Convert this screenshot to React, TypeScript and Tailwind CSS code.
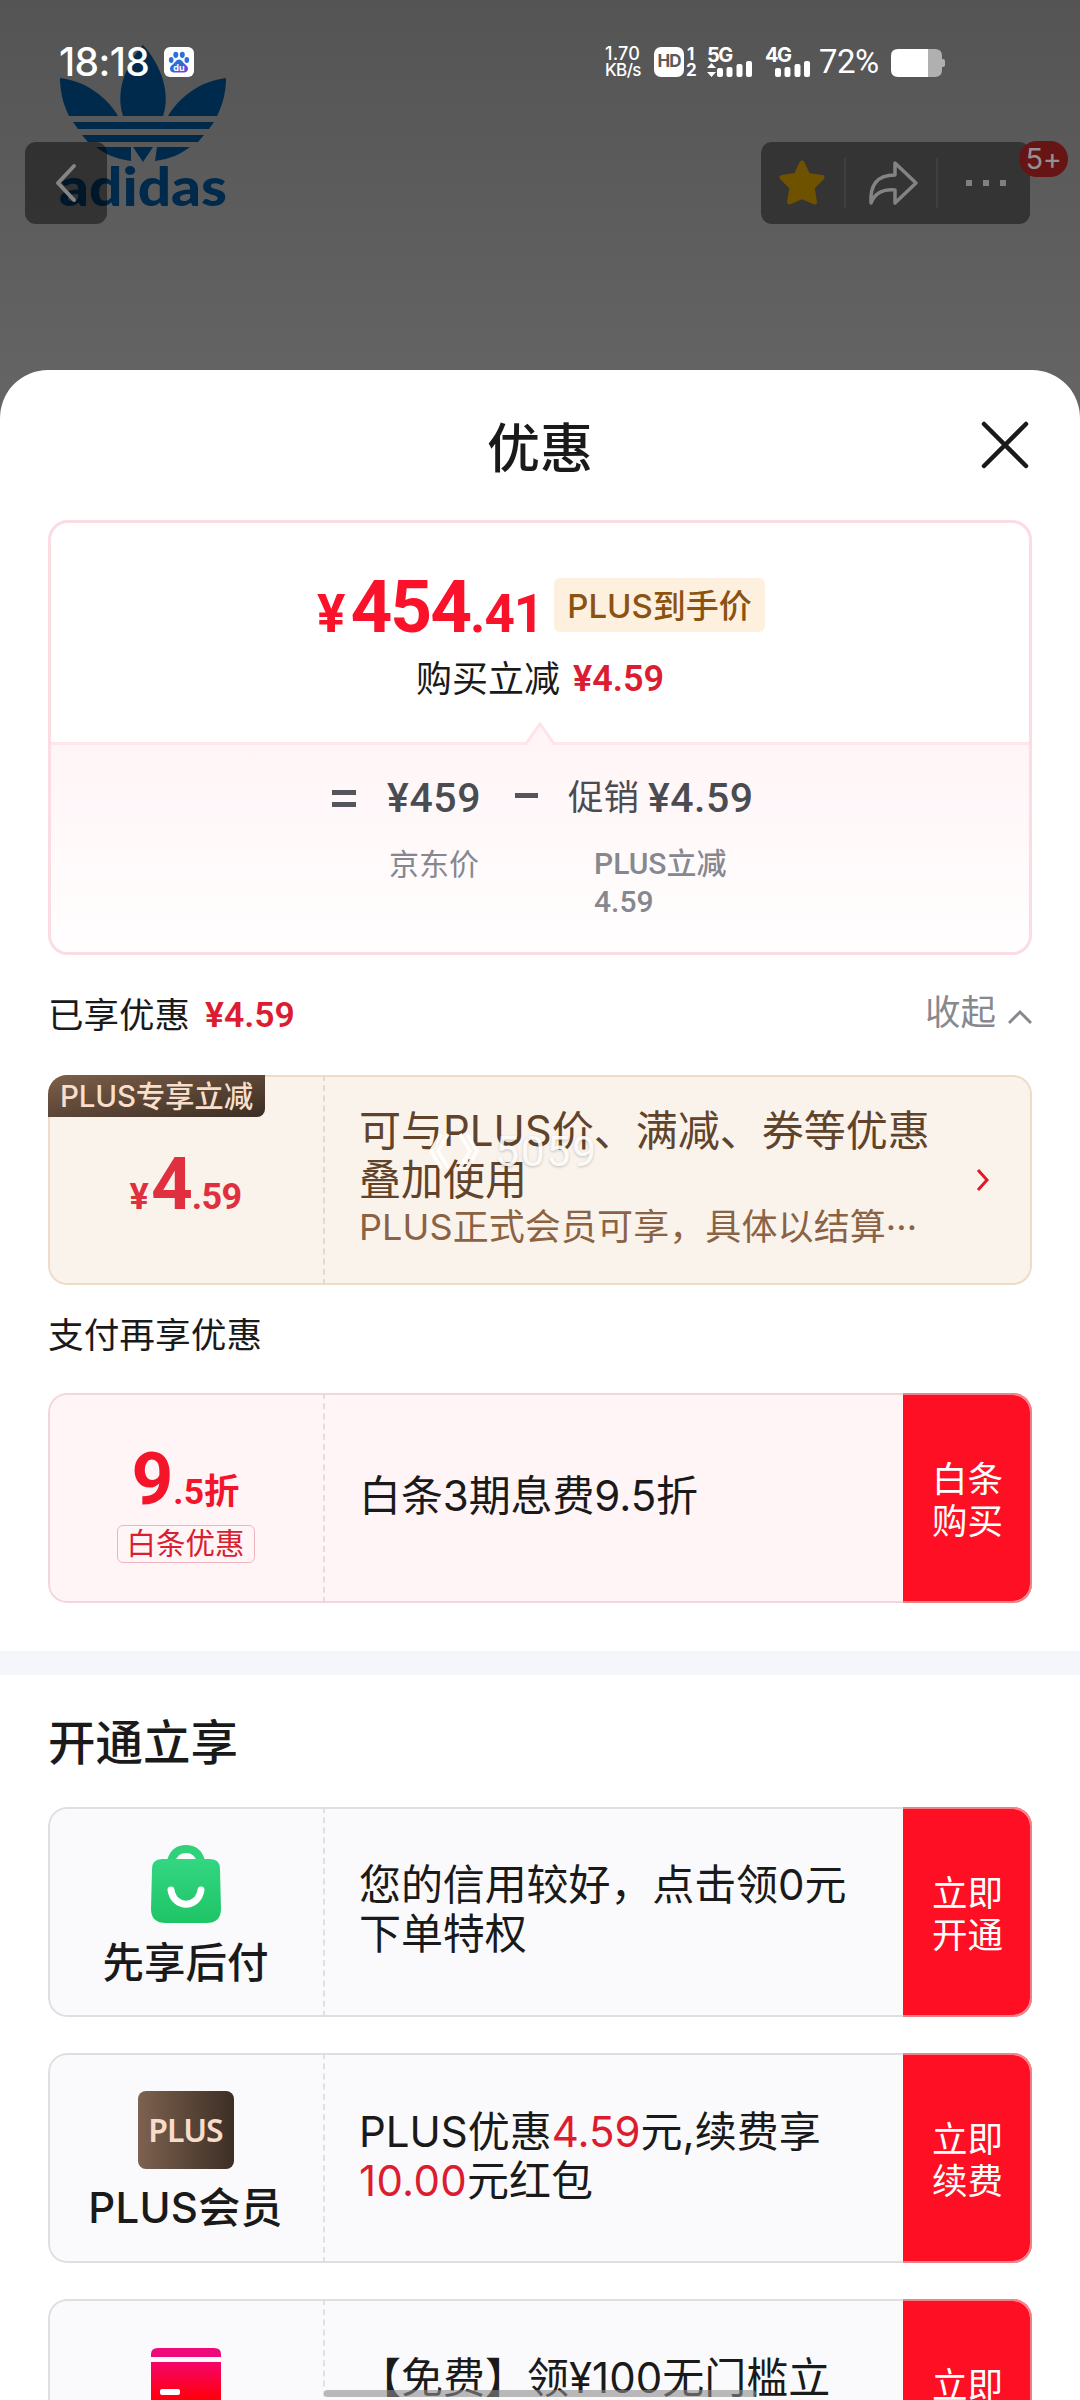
import React from "react";

const num = "font-['Roboto','Noto_Sans_CJK_SC',sans-serif]";

function Trefoil() {
  return (
    <svg width="170" height="170" viewBox="0 0 170 170" className="absolute left-[60px] top-[45px]" fill="#002a4c">
      <path d="M83 0C97 15 112 44 103 71H63C54 44 69 15 83 0Z" />
      <path d="M0 33C25 36 46 51 58 71H9C3 59 0 46 0 33Z" />
      <path d="M166 33C141 36 120 51 108 71H157C163 59 166 46 166 33Z" />
      <path d="M13 77H154L149 84H18Z" />
      <path d="M22 90H144L138 97H28Z" />
      <path d="M36 102H71V116C56 114 45 109 36 102Z" />
      <path d="M130 102H97L95 116C110 114 121 109 130 102Z" />
      <path d="M73 102H93L83 117Z" />
      <text x="-1" y="161" fontFamily="Lato, sans-serif" fontWeight="900" fontSize="53" textLength="168" lengthAdjust="spacingAndGlyphs">adidas</text>
    </svg>
  );
}

function Bars({ arrows }: { arrows?: boolean }) {
  return (
    <svg width="46" height="30" viewBox="0 0 46 30" fill="#fff" className="shrink-0">
      {arrows && <path d="M0 21L4.500 16L9 21ZM0 25L4.500 30L9 25Z" />}
      <rect x="10" y="21" width="6" height="9" rx="2" />
      <rect x="19.500" y="20" width="6" height="10" rx="2" />
      <rect x="29.500" y="17" width="6" height="13" rx="2" />
      <rect x="39" y="14" width="6" height="16" rx="2" />
    </svg>
  );
}

function Paw() {
  return (
    <svg width="30" height="30" viewBox="0 0 30 30" className="shrink-0">
      <defs>
        <linearGradient id="paw" x1="0" y1="0" x2="1" y2="1">
          <stop offset="0.4" stopColor="#2a6fd8" />
          <stop offset="1" stopColor="#7a3be0" />
        </linearGradient>
      </defs>
      <rect width="30" height="30" rx="6" fill="#fff" />
      <g fill="#2a70d8">
        <ellipse cx="11.800" cy="7.800" rx="2.500" ry="3.100" />
        <ellipse cx="18.300" cy="7.800" rx="2.500" ry="3.100" />
        <ellipse cx="7.200" cy="13" rx="2.300" ry="2.900" />
        <ellipse cx="22.800" cy="13" rx="2.300" ry="2.900" />
      </g>
      <path d="M15 12.500C18 12.500 19 16 22 18C26 21 23.500 26 19.500 25.500H10.500C6.500 26 4 21 8 18C11 16 12 12.500 15 12.500Z" fill="url(#paw)" />
      <text x="15" y="24" textAnchor="middle" fontFamily="Inter, sans-serif" fontWeight="700" fontSize="9" fill="#fff">du</text>
    </svg>
  );
}

function StatusBar() {
  return (
    <div className="absolute left-0 top-[47px] flex h-[30px] w-full items-center text-white">
      <span className="ml-[59px] w-[105px] text-[39px] leading-[30px] font-medium tracking-[-0.6px]">18:18</span>
      <Paw />
      <div className="ml-[411px] flex w-[49px] flex-col text-[18px] font-medium leading-[16px]">
        <span className="tracking-[0.2px]">1.70</span>
        <span className="text-[17px] tracking-[-0.6px]">KB/s</span>
      </div>
      <div className="flex size-[30px] items-center justify-center rounded-[7px] bg-white text-[17px] font-bold tracking-[-1px] text-[#5a5a5a]">HD</div>
      <div className="flex w-[23px] flex-col pl-[2px] text-[17px] font-bold leading-[16px]">
        <span className="pl-[1px]">1</span>
        <span>2</span>
      </div>
      <div className="relative w-[58px]">
        <span className="absolute left-0 top-[-1px] text-[20px] font-bold leading-[18px] tracking-[-1.5px]">5G</span>
        <Bars arrows />
      </div>
      <div className="relative w-[54px]">
        <span className="absolute left-0 top-[-1px] text-[20px] font-bold leading-[18px] tracking-[-1.5px]">4G</span>
        <Bars />
      </div>
      <span className={`${num} w-[72px] text-[33px] leading-[30px] tracking-[-0.5px]`}>72%</span>
      <svg width="55" height="28" viewBox="0 0 55 28" className="mt-[2px]">
        <path d="M37 0H44Q51 0 51 7V10H52Q54 10 54 12V16Q54 18 52 18H51V21Q51 28 44 28H37Z" fill="#b0b0b0" />
        <path d="M37 0H7Q0 0 0 7V21Q0 28 7 28H37Z" fill="#fff" />
      </svg>
    </div>
  );
}

function Toolbar() {
  return (
    <div className="flex h-[224px] items-end justify-between pl-[25px] pr-[50px]">
      <div className="relative flex size-[82px] items-center justify-center rounded-[11px] bg-black/45">
        <svg width="22" height="40" viewBox="0 0 22 40" fill="none" stroke="#858585" strokeWidth="4" strokeLinecap="round" strokeLinejoin="round">
          <path d="M19 3L3 20L19 37" />
        </svg>
      </div>
      <div className="relative flex h-[82px] w-[269px] items-center rounded-[11px] bg-[#343434]">
        <svg width="48" height="48" viewBox="0 0 48 48" className="ml-[17px]" fill="#6e5200" stroke="#6e5200" strokeWidth="5" strokeLinejoin="round">
          <path d="M24 4L30 16.500L44 18.500L34 28.500L36.500 43L24 37.500L11.500 43L14 28.500L4 18.500L18 16.500Z" />
        </svg>
        <div className="ml-[18px] h-[50px] w-[2px] bg-[#3f3f3f]" />
        <svg width="52" height="48" viewBox="0 0 52 48" className="ml-[21px]" fill="none" stroke="#838383" strokeWidth="3.500" strokeLinejoin="round">
          <path d="M28 4L49 24L28 44V31C15 30 8 34 4 44C3 27 9 16 28 16Z" />
        </svg>
        <div className="ml-[17px] h-[50px] w-[2px] bg-[#3f3f3f]" />
        <div className="ml-[28px] flex gap-[11px]">
          <i className="size-[6px] bg-[#808080]" />
          <i className="size-[6px] bg-[#808080]" />
          <i className="size-[6px] bg-[#808080]" />
        </div>
        <div className="absolute left-[258px] top-[-1px] flex h-[36px] w-[49px] items-center justify-center rounded-[18px] bg-[#671414] text-[29px] tracking-[-0.5px] text-[#929292]">5+</div>
      </div>
    </div>
  );
}

function Coupon({
  tone,
  left,
  children,
  action,
}: {
  tone: string;
  left: React.ReactNode;
  children: React.ReactNode;
  action?: [string, string];
}) {
  return (
    <div className={`relative mx-[48px] flex h-[210px] shrink-0 overflow-hidden rounded-[19px] ${tone}`}>
      <div className="relative flex w-[275px] shrink-0 flex-col items-center">{left}</div>
      <div className="w-0 border-l-2 border-dashed border-black/10" />
      <div className="min-w-0 flex-1 pl-[34px]">{children}</div>
      {action && (
        <div className="flex w-[129px] shrink-0 flex-col items-center justify-center bg-[#ff0f23] pt-[5px] text-[35.5px] leading-[42px] text-white">
          <span>{action[0]}</span>
          <span>{action[1]}</span>
        </div>
      )}
      <div className="absolute inset-0 rounded-[19px] border-2 border-[inherit]" />
      {action && <div className="absolute inset-y-0 right-0 w-[129px] rounded-r-[19px] border-y-2 border-r-2 border-[#f08088]" />}
    </div>
  );
}

function Bag() {
  return (
    <svg width="72" height="80" viewBox="0 0 72 80" className="mt-[37px]">
      <defs>
        <linearGradient id="bag" x1="0" y1="0" x2="0" y2="1">
          <stop offset="0" stopColor="#33d681" />
          <stop offset="1" stopColor="#1ec566" />
        </linearGradient>
      </defs>
      <path d="M21 17C24 7 30 5 36 5S48 7 51 17" fill="none" stroke="#2fd27b" strokeWidth="8" />
      <path d="M12 15H60Q70 15 70 25L71 65Q71 79 56 79H16Q1 79 1 65L2 25Q2 15 12 15Z" fill="url(#bag)" />
      <path d="M21 46C24 65 48 65 51 46" fill="none" stroke="#fff" strokeWidth="7" strokeLinecap="round" />
    </svg>
  );
}

function Card() {
  return (
    <svg width="72" height="80" viewBox="0 0 72 80" className="mt-[48px]">
      <defs>
        <linearGradient id="wallet" x1="0" y1="0" x2="0" y2="1">
          <stop offset="0" stopColor="#f5056a" />
          <stop offset="0.55" stopColor="#ff0010" />
        </linearGradient>
      </defs>
      <path d="M1 10V7Q1 1 8 1H64Q71 1 71 7V10Z" fill="#ee0a7b" />
      <path d="M1 15H71V70Q71 79 62 79H10Q1 79 1 70Z" fill="url(#wallet)" />
      <rect x="10" y="42" width="20" height="6" rx="2" fill="#fff" />
    </svg>
  );
}

const gray = "border-[#dfdfe2] bg-[#fafafc]";

export default function App() {
  return (
    <div className="relative flex h-[2400px] w-[1080px] flex-col overflow-hidden bg-gradient-to-b from-[#545454] from-0% to-[#646464] to-[16%] font-['Inter','Noto_Sans_CJK_SC',sans-serif] text-[#1a1a1a]">
      <Trefoil />
      <Toolbar />
      <StatusBar />

      <main className="relative mt-[146px] flex flex-1 flex-col overflow-hidden rounded-t-[48px] bg-white">
        <header className="relative flex h-[150px] shrink-0 items-center justify-center pt-[8px]">
          <h1 className="text-[53px] font-medium leading-[60px]">优惠</h1>
          <svg width="50" height="50" viewBox="0 0 50 50" className="absolute right-[50px] top-[50px]" stroke="#1a1a1a" strokeWidth="4.500" strokeLinecap="round">
            <path d="M4 4L46 46M46 4L4 46" />
          </svg>
        </header>

        <section className="mx-[48px] flex h-[435px] shrink-0 flex-col overflow-hidden rounded-[20px] border-[3px] border-[#fbdce2]">
          <div className="mt-[55px] flex h-[54px] items-center pl-[266px]">
            <div className={`${num} flex w-[237px] items-baseline pt-[10px] font-bold leading-[54px] text-[#f9122a]`}>
              <span className="text-[53px]">¥</span>
              <span className="ml-[5px] text-[73px] tracking-[-2px]">454</span>
              <span className="text-[53px] tracking-[-1px]">.41</span>
            </div>
            <span className="flex h-[54px] w-[211px] items-center justify-center rounded-[6px] bg-[#fdf0de] pt-[4px] text-[33px] font-medium text-[#8c5210]">PLUS到手价</span>
          </div>
          <div className="mt-[25px] flex items-center justify-center text-[36px] leading-[44px]">
            <span>购买立减</span>
            <span className={`${num} ml-[13px] font-semibold text-[#dc1c30]`}>¥4.59</span>
          </div>
          <svg width="34" height="23" viewBox="0 0 34 23" className="relative z-10 -mb-[3px] ml-[472px] mt-[21px] shrink-0">
            <path d="M2 21.500L17 2L32 21.500V23H2Z" fill="#fff4f6" />
            <path d="M1 21.500H3L17 2L31 21.500H33" fill="none" stroke="#fee3e8" strokeWidth="3" />
          </svg>
          <div className="flex-1 border-t-[3px] border-[#fee6ea] bg-gradient-to-b from-[#fff5f7] to-[#fffefe] text-[#4a4c52]">
            <div className={`${num} mt-[31px] flex h-[44px] items-center pl-[281px] text-[41px] font-medium leading-[44px]`}>
              <span className="flex w-[55px] flex-col gap-[7px]">
                <i className="h-[5px] w-[24px] bg-[#54565c]" />
                <i className="h-[5px] w-[24px] bg-[#54565c]" />
              </span>
              <span className="w-[128px] tracking-[0.6px]">¥459</span>
              <i className="mb-[5px] mr-[30px] h-[5px] w-[23px] bg-[#54565c]" />
              <span className="w-[80px] text-[35.5px] font-normal">促销</span>
              <span className="tracking-[0.5px]">¥4.59</span>
            </div>
            <div className="mt-[25px] flex pl-[338px] text-[30px] leading-[38px] text-[#86888f]">
              <span className="w-[205px]">京东价</span>
              <span className={`${num} font-medium`}>PLUS立减<br />4.59</span>
            </div>
          </div>
        </section>

        <div className="mx-[48px] flex h-[120px] shrink-0 items-center pt-[2px] text-[35.5px]">
          <span>已享优惠</span>
          <span className={`${num} ml-[15px] font-semibold text-[#dc1c30]`}>¥4.59</span>
          <span className="mb-[6px] ml-auto mr-[12px] text-[#88898f]">收起</span>
          <svg width="24" height="16" viewBox="0 0 24 16" className="mt-[1px]" fill="none" stroke="#88898f" strokeWidth="3">
            <path d="M1 14L12 3L23 14" />
          </svg>
        </div>

        <Coupon
          tone="border-[#efdcc8] bg-[#faf3ec]"
          left={
            <>
              <div className="absolute left-0 top-0 z-10 flex h-[42px] w-[217px] items-center justify-center rounded-br-[8px] bg-gradient-to-br from-[#7d604a] to-[#3c2e24] text-[29.500px] font-medium tracking-[-0.2px] text-[#f8dfcc]">PLUS专享立减</div>
              <div className={`${num} mt-[77px] flex items-baseline font-bold leading-[64px] text-[#e0303f]`}>
                <span className="text-[36px]">¥</span>
                <span className="ml-[2px] text-[73px] tracking-[-1px]">4</span>
                <span className="text-[36px] tracking-[-0.7px]">.59</span>
              </div>
            </>
          }
        >
          <div className="flex h-full items-center">
            <div className="w-[590px] pb-[4px] text-[42px] leading-[49px] text-[#60432a]">
              <div className="whitespace-nowrap">可与PLUS价、满减、券等优惠</div>
              <div>叠加使用</div>
              <div className="whitespace-nowrap text-[36px] leading-[46px] tracking-[0.1px] text-[#8b6344]">PLUS正式会员可享，具体以结算···</div>
            </div>
            <svg width="14" height="24" viewBox="0 0 14 24" className="ml-[27px]" fill="none" stroke="#e21a26" strokeWidth="3">
              <path d="M2 2L11 12L2 22" />
            </svg>
          </div>
        </Coupon>

        <h2 className="mx-[48px] flex h-[108px] shrink-0 items-center pb-[6px] text-[35.7px]">支付再享优惠</h2>

        <Coupon
          tone="border-[#f3d6db] bg-[#fff5f7]"
          action={["白条", "购买"]}
          left={
            <>
              <div className={`${num} mt-[54px] flex items-baseline font-bold leading-[64px] text-[#f5152b]`}>
                <span className="text-[73px]">9</span>
                <span className="text-[35.5px]">.5折</span>
              </div>
              <span className="mt-[1px] flex h-[38px] w-[138px] items-center justify-center rounded-[6px] border-[1.5px] border-[#efb4bd] text-[29.5px] leading-none text-[#d9202f]">白条优惠</span>
            </>
          }
        >
          <div className="mt-[78px] text-[42px] leading-[49px] tracking-[-0.1px]">白条3期息费9.5折</div>
        </Coupon>

        <div className="mt-[48px] h-[24px] shrink-0 bg-[#f5f6fb]" />
        <h2 className="mx-[48px] flex h-[132px] shrink-0 items-center pt-[4px] text-[47.5px] font-medium">开通立享</h2>

        <div className="flex shrink-0 flex-col gap-[36px]">
          <Coupon
            tone={gray}
            action={["立即", "开通"]}
            left={
              <>
                <Bag />
                <span className="mt-[9px] text-[41.5px] font-medium leading-[60px]">先享后付</span>
              </>
            }
          >
            <div className="mt-[53px] text-[42px] leading-[49px] tracking-[-0.1px]">您的信用较好，点击领0元<br />下单特权</div>
          </Coupon>
          <Coupon
            tone={gray}
            action={["立即", "续费"]}
            left={
              <>
                <div className="mt-[38px] flex h-[78px] w-[96px] items-center justify-center rounded-[8px] bg-gradient-to-r from-[#7d6250] to-[#3d2f25] font-['Noto_Sans',sans-serif] text-[32px] font-semibold tracking-[-1px] text-[#f8dcc9]">PLUS</div>
                <span className="mt-[9px] text-[42px] font-medium leading-[60px] tracking-[0.3px]">PLUS会员</span>
              </>
            }
          >
            <div className="mt-[54px] text-[42px] leading-[49px]">
              PLUS优惠<span className="text-[#dc1c30]">4.59</span>元,续费享<br />
              <span className="tracking-[0.3px] text-[#dc1c30]">10.00</span>元红包
            </div>
          </Coupon>
          <Coupon tone={gray} action={["立即", "领取"]} left={<Card />}>
            <div className="mt-[54px] whitespace-nowrap text-[42px] leading-[49px]">【免费】领¥100无门槛立</div>
          </Coupon>
        </div>
      </main>

      <div className="absolute left-[428px] top-[1129px] flex items-center gap-[15px] text-[43px] leading-[44px] text-white/90 [text-shadow:0_1px_3px_rgba(0,0,0,0.22)]">
        <svg width="52" height="40" viewBox="0 0 52 40" fill="none" stroke="#fff" strokeOpacity="0.9" strokeWidth="3.500">
          <path d="M13 3L3 20L13 37M20 3L10 20L20 37M32 3L42 20L32 37M39 3L49 20L39 37" />
        </svg>
        <span className={`${num} tracking-[1.5px]`}>5059</span>
      </div>
      <div className="absolute left-[324px] top-[2390px] h-[7px] w-[432px] rounded-full bg-[#8c8c8c]/60" />
    </div>
  );
}
